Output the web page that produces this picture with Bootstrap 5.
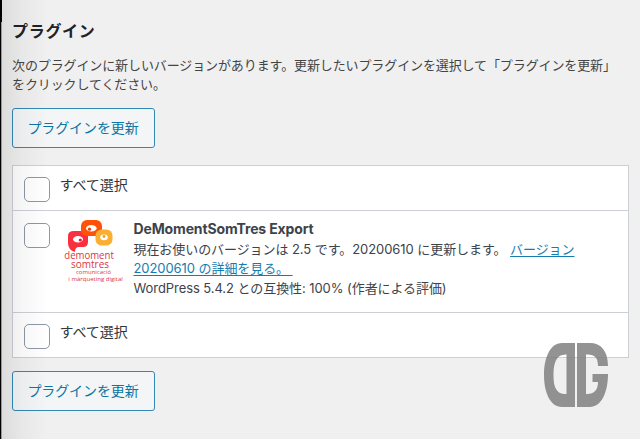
<!DOCTYPE html>
<html lang="ja">
<head>
<meta charset="utf-8">
<meta name="viewport" content="width=device-width, initial-scale=1">
<title>プラグイン</title>
<link href="https://cdn.jsdelivr.net/npm/bootstrap@5.3.0/dist/css/bootstrap.min.css" rel="stylesheet">
<style>
body{background:#f0f0f0;font-family:Inter,"Noto Sans CJK JP",sans-serif;font-size:13px;line-height:19px;color:#3c434a;height:439px;overflow:hidden}
.page{padding:0 11px 0 12px;height:439px}
.edge{left:0;top:0;width:48px;height:439px;pointer-events:none;background:linear-gradient(90deg,rgba(0,0,0,.09),rgba(0,0,0,.035) 45%,transparent)}
.edge::before{content:"";position:absolute;left:0;top:0;width:1px;height:439px;background:#000;box-shadow:1px 0 #999}
.edge::after{content:"";position:absolute;left:0;top:0;width:2px;height:22px;background:#000}
h2{font-size:16px;line-height:22px;font-weight:700;color:#1d2327;padding-top:20px;letter-spacing:.7px}
.lead-in{color:#444;letter-spacing:-.11px;margin-top:14px;height:39px;line-height:19px}
.btn-wp{--bs-btn-color:#0a76a5;--bs-btn-border-color:#3089b5;--bs-btn-bg:#f3f5f6;--bs-btn-hover-color:#0a76a5;--bs-btn-hover-bg:#f1f1f1;width:143px;height:40px;padding:0 1px 1px 0;font-size:14px;border-radius:3px;border-width:1.5px;margin-top:13px;letter-spacing:-.1px;flex:none}
.plugins{border:1px solid #ccd0d4;background:#fff;margin-top:17px;width:617px}
.plugins>div{padding-left:11px}
.all-row{height:44px}
.item-row{height:103px;border-top:1px solid #ccd0d4;border-bottom:1px solid #ccd0d4}
.form-check-input.cb{width:26px;height:25px;margin:0;border:1.5px solid #8c98a4;border-radius:5px;background-color:#fff;flex:none}
.all-row .cb{margin-top:11px}
.item-row .cb{margin-top:12px}
.all-row label{margin:9px 0 0 9.5px;font-size:14px;line-height:20px;color:#32373c;letter-spacing:-.05px}
.desc{margin:8px 0 0 5.5px;line-height:19.5px;letter-spacing:-.07px}
.desc strong{font-size:14px;font-weight:700;letter-spacing:-.14px}
.desc a{color:#147db0;text-underline-offset:2px}
.logo{width:70px;height:72px;margin:3px 0 0 8px;flex:none}
.logo text{font-family:"Open Sans","Noto Sans",sans-serif}
.stamp{left:544px;top:343px;width:64px;height:64px}
</style>
<script src="https://cdn.jsdelivr.net/npm/bootstrap@5.3.0/dist/js/bootstrap.bundle.min.js"></script>
</head>
<body>
<main class="page d-flex flex-column align-items-start">
  <h2 class="m-0">プラグイン</h2>
  <p class="lead-in mb-0 text-nowrap">次のプラグインに新しいバージョンがあります。更新したいプラグインを選択して「プラグインを更新」<br>をクリックしてください。</p>
  <button type="button" class="btn btn-wp">プラグインを更新</button>
  <section class="plugins">
    <div class="all-row d-flex align-items-start">
      <input class="form-check-input cb" type="checkbox" id="all-top"><label for="all-top">すべて選択</label>
    </div>
    <div class="item-row d-flex align-items-start">
      <input class="form-check-input cb" type="checkbox" aria-label="DeMomentSomTres Export">
      <svg class="logo" viewBox="58 214 70 72" fill="#e0343f">
        <path fill="#fb303f" d="M74 231h9q5 0 5 5v6q0 5-5 5h-4q-4 0-4 5-7-2-7-9v-7q0-5 6-5Z"/>
        <rect x="81" y="220" width="21" height="16" rx="6" fill="#ff5208"/>
        <rect x="95.500" y="229.500" width="17" height="16" rx="6" fill="#fbaf30"/>
        <g fill="#fff"><ellipse cx="78" cy="239.300" rx="5" ry="3.200"/><ellipse cx="91.300" cy="228.200" rx="5.300" ry="3.200"/><ellipse cx="104" cy="237.300" rx="3.800" ry="2.900"/></g>
        <circle cx="80.300" cy="240" r="1.600" fill="#d9202f"/><circle cx="89.500" cy="229.200" r="1.600" fill="#ed3c08"/><circle cx="104" cy="236.500" r="1.400" fill="#eda027"/>
        <text x="64.300" y="258.900" font-size="10.500" textLength="49.500" lengthAdjust="spacingAndGlyphs">demoment</text>
        <text x="71" y="267.500" font-size="10.500" textLength="38" lengthAdjust="spacingAndGlyphs">somtres</text>
        <text x="76" y="273.700" font-size="6" textLength="35" lengthAdjust="spacingAndGlyphs">comunicació</text>
        <text x="68.300" y="280.700" font-size="6" textLength="54.500" lengthAdjust="spacingAndGlyphs">i màrqueting digital</text>
      </svg>
      <div class="desc text-nowrap"><strong>DeMomentSomTres Export</strong><br>現在お使いのバージョンは 2.5 です。20200610 に更新します。 <a href="#">バージョン<br>20200610 の詳細を見る。&nbsp;</a><br>WordPress 5.4.2 との互換性: 100% (作者による評価)</div>
    </div>
    <div class="all-row d-flex align-items-start">
      <input class="form-check-input cb" type="checkbox" id="all-bottom"><label for="all-bottom">すべて選択</label>
    </div>
  </section>
  <button type="button" class="btn btn-wp">プラグインを更新</button>
</main>
<div class="edge position-absolute"></div>
<svg class="stamp position-absolute" viewBox="0 0 64 64" fill="#808080" fill-opacity=".85" fill-rule="evenodd" aria-hidden="true">
  <path d="M31 0v64H18C6 64 0 49 0 32S6 0 18 0ZM22.500 11.500C12 11 9.500 20 9.500 32S12 51.500 22.500 51Z"/>
  <path d="M33 0H46C57 0 64 8 64 23H54C54 15 51 11 42 11.500V51C50 51.500 54 47 54 39H48.500V31H64C64 50 57 64 46 64H33Z"/>
</svg>
</body>
</html>
